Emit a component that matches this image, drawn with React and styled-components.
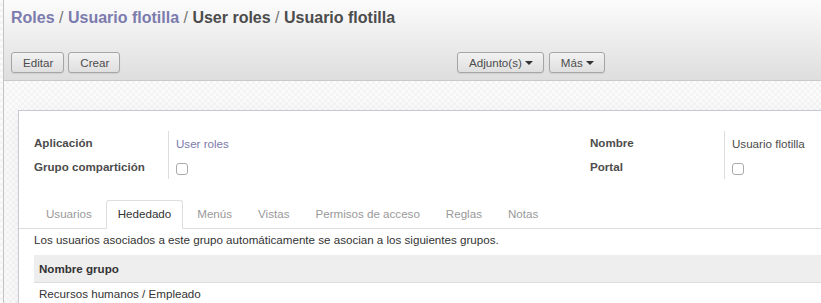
import React from 'react';
import styled, { createGlobalStyle } from 'styled-components';

const GlobalStyle = createGlobalStyle`
	html, body {
		margin: 0;
		padding: 0;
		overflow: hidden;
	}
	body {
		font-family: "Liberation Sans", Arial, Helvetica, sans-serif;
		font-size: 11.6px;
		color: #4c4c4c;
		background-color: #f9f9f9;
		background-image: conic-gradient(#f4f4f4 25%, #fbfbfb 0 50%, #f4f4f4 0 75%, #fbfbfb 0);
		background-size: 6px 6px;
	}
`;

const breadcrumbs = [
	{ label: 'Roles', link: true },
	{ label: 'Usuario flotilla', link: true },
	{ label: 'User roles' },
	{ label: 'Usuario flotilla' },
];

const tabs = ['Usuarios', 'Hededado', 'Menús', 'Vistas', 'Permisos de acceso', 'Reglas', 'Notas'];

function App () {
	return (
		<>
			<GlobalStyle />
			<Main>
				<ControlPanel>
					<Breadcrumb>
						{breadcrumbs.map((b, i) => (
							<React.Fragment key={i}>
								{i > 0 && <Sep> / </Sep>}
								<Crumb link={b.link}>{b.label}</Crumb>
							</React.Fragment>
						))}
					</Breadcrumb>
					<ButtonRow>
						<ButtonGroup>
							<Button>Editar</Button>
							<Button>Crear</Button>
						</ButtonGroup>
						<ButtonGroup gap={5}>
							<Button>Adjunto(s) <Caret /></Button>
							<Button>Más <Caret /></Button>
						</ButtonGroup>
					</ButtonRow>
				</ControlPanel>
				<Content>
					<Sheet>
						<Groups>
							<Group>
								<Label>Aplicación</Label>
								<Value><Link>User roles</Link></Value>
								<Label>Grupo compartición</Label>
								<Value><Checkbox /></Value>
							</Group>
							<Group>
								<Label>Nombre</Label>
								<Value>Usuario flotilla</Value>
								<Label>Portal</Label>
								<Value><Checkbox /></Value>
							</Group>
						</Groups>
						<Tabs>
							{tabs.map(t => (
								<Tab key={t} active={t === 'Hededado'}>{t}</Tab>
							))}
						</Tabs>
						<TabBody>
							<Note>Los usuarios asociados a este grupo automáticamente se asocian a los siguientes grupos.</Note>
							<Table>
								<HeadCell>Nombre grupo</HeadCell>
								<Cell>Recursos humanos / Empleado</Cell>
							</Table>
						</TabBody>
					</Sheet>
				</Content>
			</Main>
		</>
	)
}

const Main = styled.div`
	margin-left: 3px;
	border-left: 1px solid #c4c4c4;
	min-height: 303px;
`;

const ControlPanel = styled.div`
	height: 81px;
	box-sizing: border-box;
	padding: 7px 7px 0 7px;
	background: linear-gradient(to bottom, #fcfcfc, #dedede);
	border-bottom: 1px solid #c9c9c9;
`;

const Breadcrumb = styled.div`
	font-size: 16px;
	font-weight: bold;
	line-height: 22px;
	white-space: pre;
`;

const Crumb = styled.span`
	color: ${p => p.link ? '#7c7bad' : '#4c4c4c'};
`;

const Sep = styled.span`
	color: #777;
	font-weight: normal;
`;

const ButtonRow = styled.div`
	display: grid;
	grid-template-columns: 446px auto;
	margin-top: 23px;
`;

const ButtonGroup = styled.div`
	display: flex;
	gap: ${p => p.gap || 4}px;
`;

const Button = styled.button`
	height: 21px;
	box-sizing: border-box;
	padding: 0 10px 0 11px;
	display: flex;
	align-items: center;
	gap: 3px;
	font-family: inherit;
	font-size: 11.6px;
	color: #4c4c4c;
	border: 1px solid #a6a6a6;
	border-radius: 3px;
	background: linear-gradient(to bottom, #f2f2f2, #dfdfdf);
	box-shadow: 0 1px 1px rgba(0,0,0,0.08);
	cursor: pointer;
`;

const Caret = styled.span`
	width: 0;
	height: 0;
	border-left: 4px solid transparent;
	border-right: 4px solid transparent;
	border-top: 4px solid #333;
`;

const Content = styled.div`
	padding: 29px 0 0 14px;
`;

const Sheet = styled.div`
	width: 1130px;
	min-height: 200px;
	background: #fff;
	border-top: 1px solid #c8c8d3;
	border-left: 1px solid #c8c8d3;
	box-shadow: 0 4px 20px rgba(0,0,0,0.05);
	padding: 20px 0 0 0;
`;

const Groups = styled.div`
	display: grid;
	grid-template-columns: 540px 540px;
	column-gap: 16px;
	padding: 0 15px;
	margin-bottom: 21px;
`;

const Group = styled.div`
	display: grid;
	grid-template-columns: 134px 1fr;
	grid-auto-rows: 24px;
`;

const Label = styled.div`
	font-weight: bold;
	line-height: 23px;
	white-space: nowrap;
`;

const Value = styled.div`
	border-left: 1px solid #ddd;
	padding-left: 7px;
	display: flex;
	align-items: center;
	padding-top: 1px;
	box-sizing: border-box;
`;

const Link = styled.span`
	color: #7c7bad;
`;

const Checkbox = styled.span`
	width: 12px;
	height: 12px;
	box-sizing: border-box;
	border: 1px solid #aaa;
	border-radius: 3px;
	background: #fff;
	margin-top: 2px;
`;

const Tabs = styled.div`
	display: flex;
	padding-left: 15px;
	border-bottom: 1px solid #ddd;
`;

const Tab = styled.div`
	height: 27px;
	line-height: 26px;
	padding: 0 11px;
	margin-right: 2px;
	margin-bottom: -1px;
	border: 1px solid ${p => p.active ? '#ddd' : 'transparent'};
	border-bottom-color: ${p => p.active ? '#fff' : 'transparent'};
	border-radius: 3px 3px 0 0;
	background: ${p => p.active ? '#fff' : 'transparent'};
	color: ${p => p.active ? '#333' : '#999'};
	white-space: nowrap;
`;

const TabBody = styled.div`
	padding: 2px 0 0 15px;
`;

const Note = styled.div`
	color: #333;
	line-height: 18px;
	margin-bottom: 6px;
`;

const Table = styled.div`
	display: flex;
	flex-direction: column;
`;

const HeadCell = styled.div`
	background: #eee;
	border-bottom: 1px solid #ddd;
	height: 27px;
	line-height: 27px;
	padding-left: 5px;
	font-weight: bold;
	color: #333;
`;

const Cell = styled.div`
	line-height: 22px;
	padding-left: 5px;
	color: #333;
`;

export default App;
